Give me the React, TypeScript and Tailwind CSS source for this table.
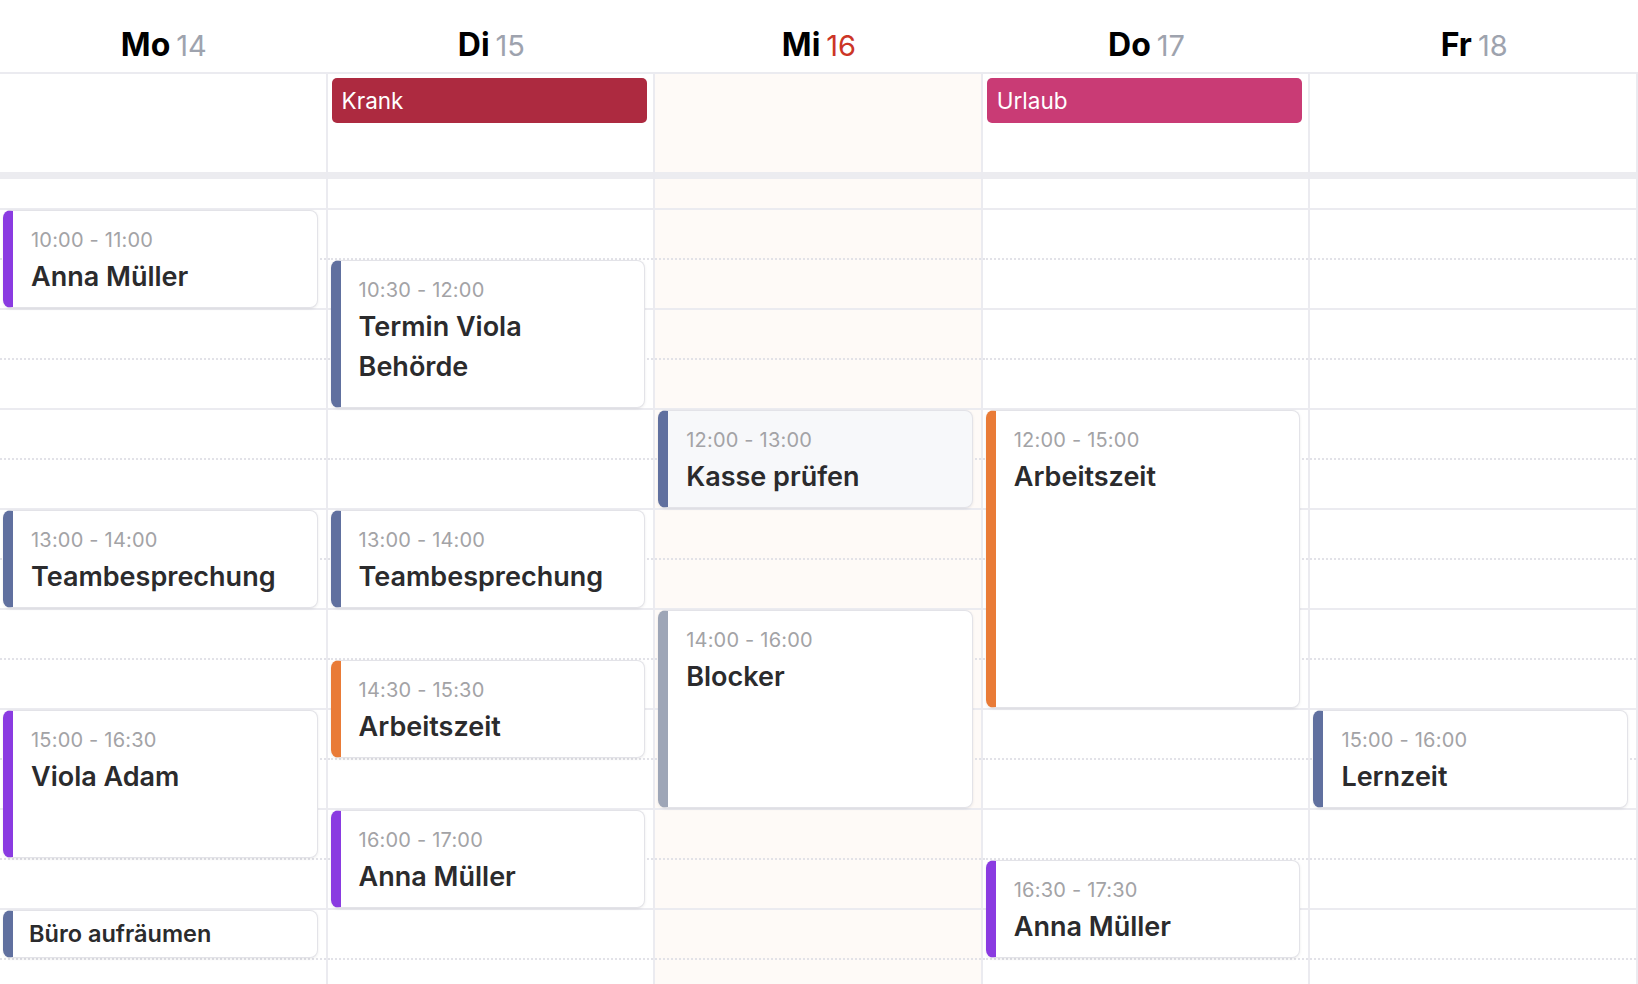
type CalEvent = {
  start: number;
  end: number;
  title: string;
  accent: string;
  bg?: string;
};

type Day = {
  name: string;
  num: string;
  today?: boolean;
  allDay?: { label: string; color: string };
  events: CalEvent[];
};

const PURPLE = "border-l-[#8a3be1]";
const SLATE = "border-l-[#60709f]";
const ORANGE = "border-l-[#e97b37]";
const GREY = "border-l-[#9ea6b7]";

const days: Day[] = [
  {
    name: "Mo",
    num: "14",
    events: [
      { start: 10, end: 11, title: "Anna Müller", accent: PURPLE },
      { start: 13, end: 14, title: "Teambesprechung", accent: SLATE },
      { start: 15, end: 16.5, title: "Viola Adam", accent: PURPLE },
      { start: 17, end: 17.5, title: "Büro aufräumen", accent: SLATE },
    ],
  },
  {
    name: "Di",
    num: "15",
    allDay: { label: "Krank", color: "bg-[#ad2a40]" },
    events: [
      { start: 10.5, end: 12, title: "Termin Viola Behörde", accent: SLATE },
      { start: 13, end: 14, title: "Teambesprechung", accent: SLATE },
      { start: 14.5, end: 15.5, title: "Arbeitszeit", accent: ORANGE },
      { start: 16, end: 17, title: "Anna Müller", accent: PURPLE },
    ],
  },
  {
    name: "Mi",
    num: "16",
    today: true,
    events: [
      { start: 12, end: 13, title: "Kasse prüfen", accent: SLATE, bg: "bg-[#f7f8fa]" },
      { start: 14, end: 16, title: "Blocker", accent: GREY },
    ],
  },
  {
    name: "Do",
    num: "17",
    allDay: { label: "Urlaub", color: "bg-[#c93b75]" },
    events: [
      { start: 12, end: 15, title: "Arbeitszeit", accent: ORANGE },
      { start: 16.5, end: 17.5, title: "Anna Müller", accent: PURPLE },
    ],
  },
  {
    name: "Fr",
    num: "18",
    events: [{ start: 15, end: 16, title: "Lernzeit", accent: SLATE }],
  },
];

const hours = [10, 11, 12, 13, 14, 15, 16, 17];

function fmt(t: number) {
  const h = Math.floor(t);
  const m = t % 1 ? "30" : "00";
  return `${h}:${m}`;
}

function EventCard({ ev }: { ev: CalEvent }) {
  // 100px per hour, first full hour line sits 29px into the grid
  const top = 31 + (ev.start - 10) * 100;
  const height = (ev.end - ev.start) * 100 - 2;
  const short = ev.end - ev.start <= 0.5;

  return (
    <div
      className={`absolute left-[3px] right-[8px] overflow-hidden rounded-[8px] border border-[#e3e3e8] border-l-[10px] shadow-[0_1px_3px_rgba(0,0,0,0.08)] ${ev.accent} ${ev.bg ?? "bg-white"}`}
      style={{ top, height }}
    >
      {short ? (
        <div className="flex h-full items-center pl-[16px] text-[23.5px] font-semibold text-[#2b2b2d]">
          {ev.title}
        </div>
      ) : (
        <div className="pl-[18px] pr-3 pt-[16px]">
          <div className="text-[20px] leading-[26px] tracking-[0.2px] text-[#a3a3a6]">
            {fmt(ev.start)} - {fmt(ev.end)}
          </div>
          <div className="mt-[4px] text-[27px] font-semibold leading-[40px] text-[#2b2b2d]">
            {ev.title}
          </div>
        </div>
      )}
    </div>
  );
}

function DayColumn({ day }: { day: Day }) {
  return (
    <div className={`flex-1 border-r-2 border-[#ebebf0] ${day.today ? "bg-[#fefaf7]" : ""}`}>
      {/* Ganztägig */}
      <div className="h-[105px] border-b-[7px] border-[#ececf0] pl-[4px] pr-[6px] pt-[4px]">
        {day.allDay && (
          <div
            className={`h-[45px] rounded-[5px] pl-[10px] text-[22.5px] leading-[45px] text-white ${day.allDay.color}`}
          >
            {day.allDay.label}
          </div>
        )}
      </div>

      <div className="relative h-[805px] overflow-hidden">
        <div className="h-[29px]" />
        {hours.map((h) => (
          <div key={h} className="h-[100px] border-t-2 border-[#ebebf0]">
            <div className="h-[50px] border-b-2 border-dotted border-[#e2e2e8]" />
          </div>
        ))}
        {day.events.map((ev, i) => (
          <EventCard key={i} ev={ev} />
        ))}
      </div>
    </div>
  );
}

export default function App() {
  return (
    <div className="h-[984px] w-full overflow-hidden bg-white font-['Inter',sans-serif]">
      <div className="flex h-[74px] border-b-2 border-[#ebebf0]">
        {days.map((d) => (
          <div key={d.name} className="flex flex-1 items-baseline justify-center gap-[6px] pt-[25px] leading-[40px]">
            <span className="text-[32px] font-bold text-black">{d.name}</span>
            <span className={`text-[29px] ${d.today ? "text-[#cc3526]" : "text-[#9ea3ae]"}`}>{d.num}</span>
          </div>
        ))}
      </div>

      <div className="flex">
        {days.map((d) => (
          <DayColumn key={d.name} day={d} />
        ))}
      </div>
    </div>
  );
}
